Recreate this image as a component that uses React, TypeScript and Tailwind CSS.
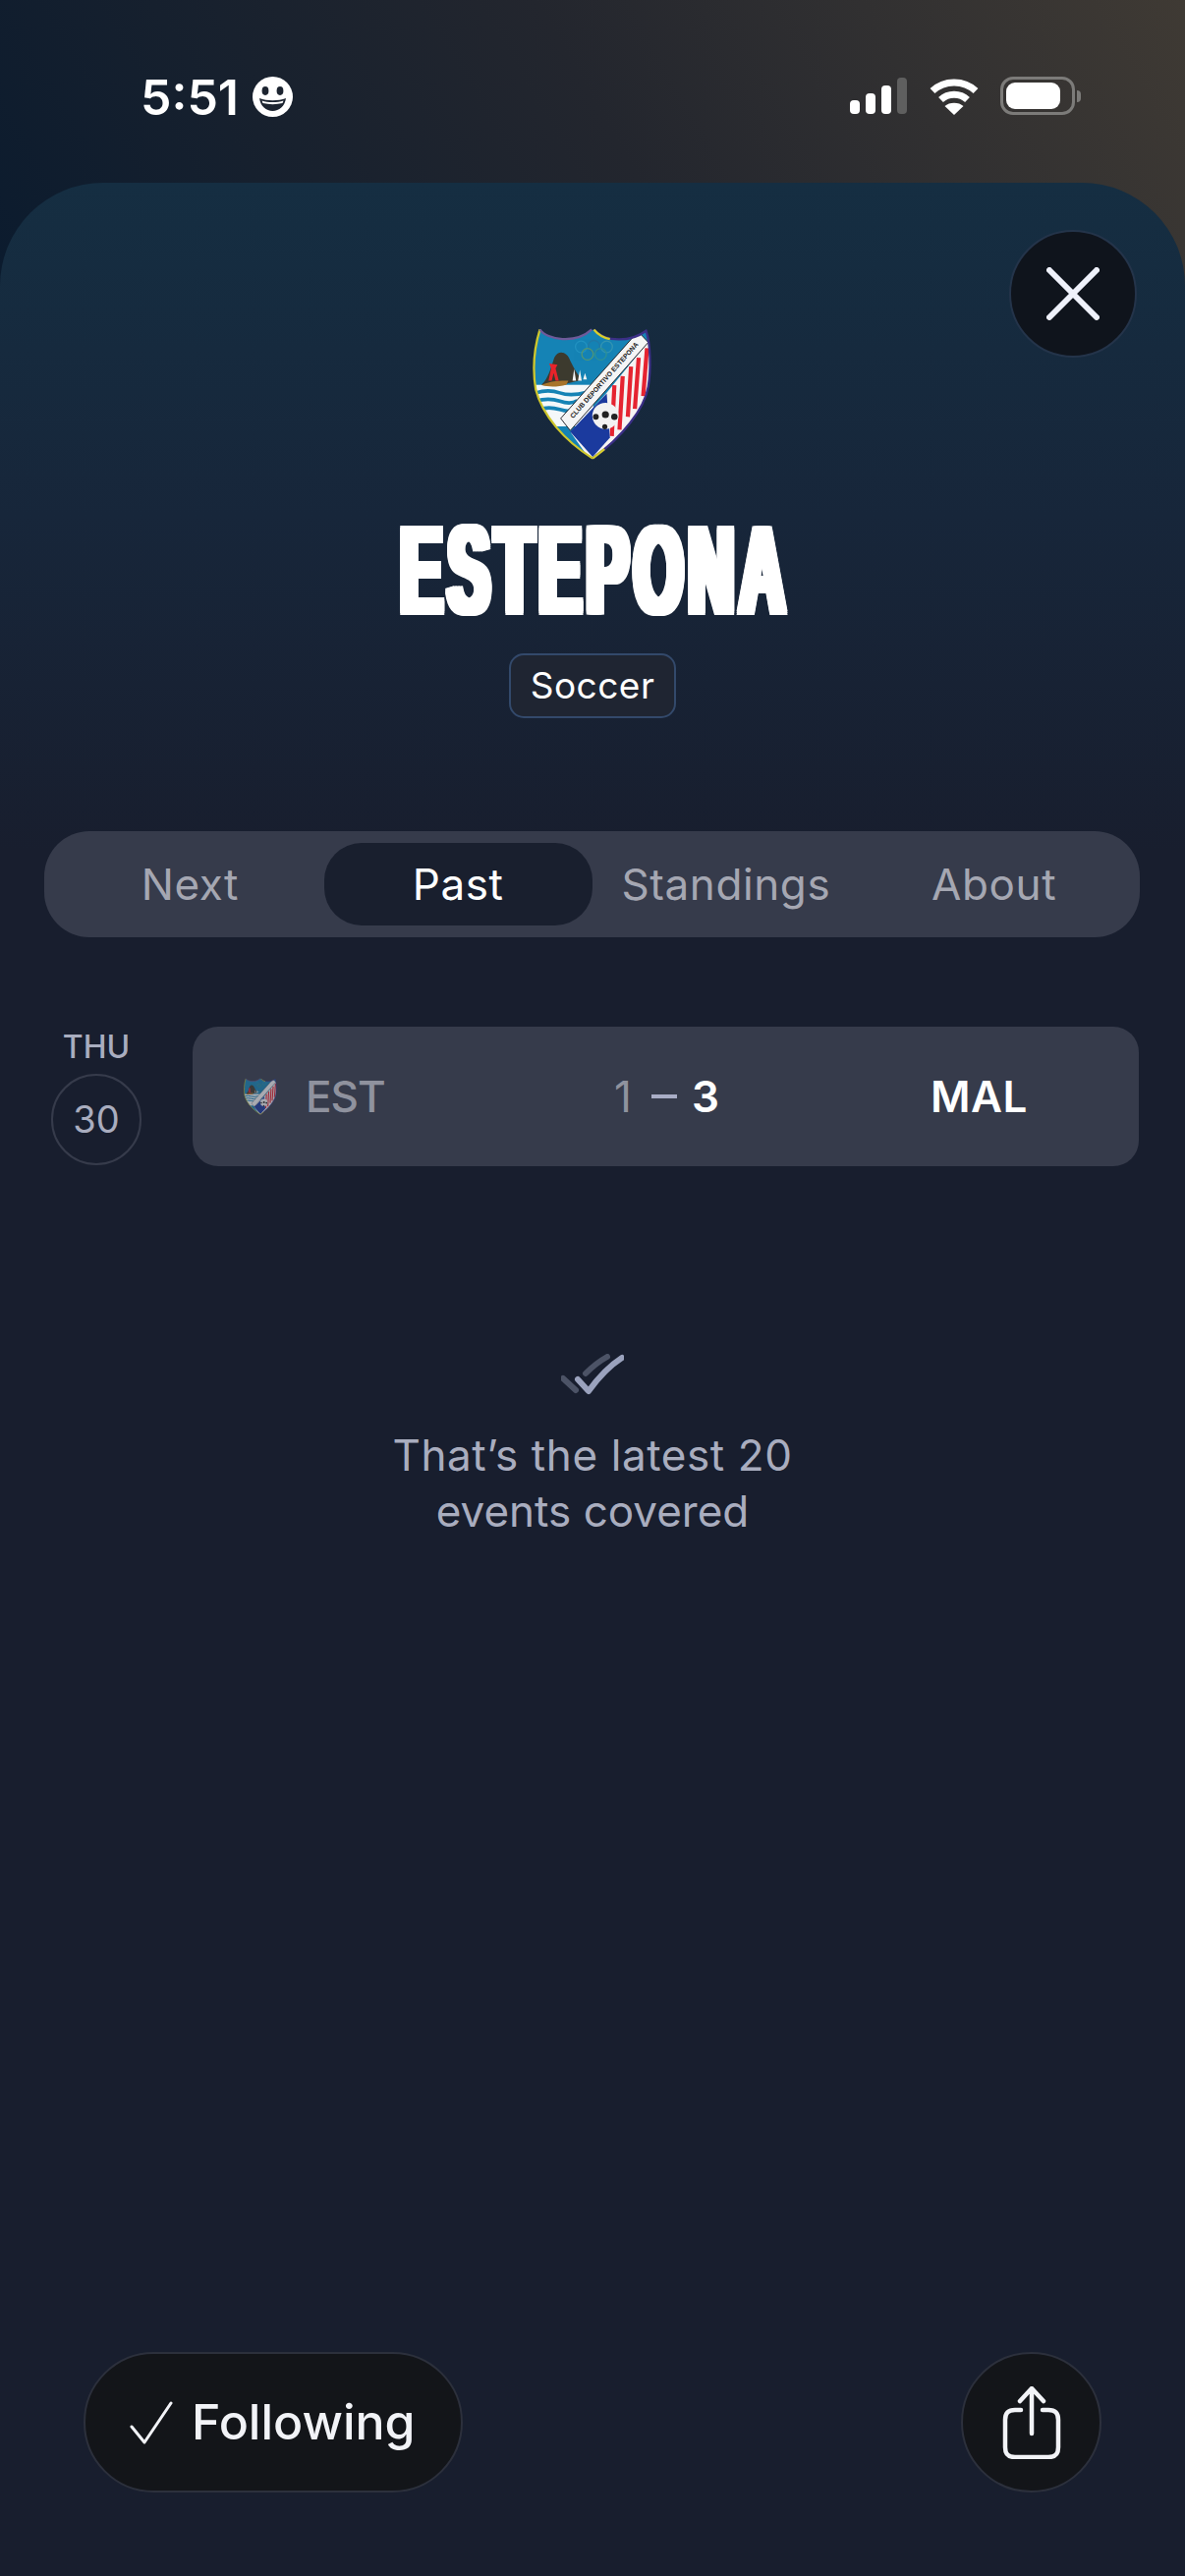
import React from "react";

const tabs = ["Next", "Past", "Standings", "About"];

function Crest({ className, text = true }: { className: string; text?: boolean }) {
    const shield =
        "M143 72 C165 105 255 118 305 72 L312 72 C350 115 430 110 475 76 C490 120 490 200 482 250 C470 320 400 410 308 475 C220 420 150 340 130 260 C120 200 125 130 143 72 Z";
    return (
        <svg viewBox="120 62 375 420" className={className}>
            <defs>
                <clipPath id="shield">
                    <path d={shield} />
                </clipPath>
                <path id="band-line" d="M228 372 L471 98" />
            </defs>
            <g clipPath="url(#shield)">
                <rect x="110" y="60" width="390" height="430" fill="#1583b5" />
                {/* sea */}
                <rect x="110" y="245" width="200" height="130" fill="#f4f8fa" />
                <path d="M130 270 Q170 258 205 270 T290 268 M130 296 Q170 284 205 296 T260 294 M140 322 Q170 312 205 322 T238 320" fill="none" stroke="#1583b5" strokeWidth="11" />
                {/* rock and tower */}
                <path d="M148 245 C170 225 178 190 188 160 C200 135 228 140 238 170 C250 195 262 215 275 230 L232 240 C210 250 170 250 148 245 Z" fill="#3c3a2e" />
                <path d="M148 246 C175 232 210 232 232 232 L226 244 C200 252 170 252 148 246 Z" fill="#a8742a" />
                <path d="M172 178 L198 182 L192 194 L202 232 L192 232 L186 208 L180 232 L170 232 L178 194 Z" fill="#e8232a" />
                <path d="M245 232 L250 195 L256 232 Z M262 232 L268 198 L274 232 Z M278 228 L284 208 L290 228 Z" fill="#f2f4f4" />
                {/* rings */}
                <g fill="none" strokeWidth="4" opacity="0.6">
                    <circle cx="272" cy="126" r="18" stroke="#2a9bc8" />
                    <circle cx="312" cy="124" r="18" stroke="#27729f" />
                    <circle cx="352" cy="126" r="18" stroke="#48a0b0" />
                    <circle cx="292" cy="149" r="18" stroke="#7ba44a" />
                    <circle cx="333" cy="149" r="18" stroke="#3f9a7e" />
                </g>
                {/* lower right */}
                <path d="M240 395 L350 272 L490 100 L490 480 L300 480 Z" fill="#f6f3f3" />
                <path d="M376 246 L368 405 M402 218 L392 385 M428 188 L418 345 M452 160 L440 320 M478 130 L466 280" stroke="#e52330" strokeWidth="13" fill="none" />
                <path d="M238 392 L352 272 L362 410 L308 470 Z" fill="#1b3a9e" />
                <circle cx="348" cy="342" r="41" fill="#f2f2f2" />
                <circle cx="348" cy="338" r="11" fill="#222" />
                <circle cx="318" cy="345" r="9" fill="#222" />
                <circle cx="376" cy="345" r="10" fill="#222" />
                <circle cx="346" cy="376" r="8" fill="#222" />
                {/* band */}
                <path d="M208 350 L450 78 L482 112 L238 388 Z" fill="#f5f5f5" stroke="#26262c" strokeWidth="3" />
            </g>
            {text && (
                <text fontFamily="Liberation Sans, sans-serif" fontWeight="700" fontSize="21" fill="#222">
                    <textPath href="#band-line" startOffset="50%" textAnchor="middle">
                        CLUB DEPORTIVO ESTEPONA
                    </textPath>
                </text>
            )}
            {/* border */}
            <path d="M308 475 C220 420 150 340 130 260 C120 200 125 130 143 72" fill="none" stroke="#cfc72c" strokeWidth="7" />
            <path d="M143 72 C165 105 255 118 305 72" fill="none" stroke="#6e5a9a" strokeWidth="7" />
            <path d="M312 72 C350 115 430 110 475 76 C490 120 490 200 482 250 C470 320 400 410 308 475" fill="none" stroke="#3b2f86" strokeWidth="7" />
            <path d="M308 475 L345 446" stroke="#d8d02a" strokeWidth="7" />
            <path d="M312 72 C325 88 345 98 362 102" fill="none" stroke="#d8d02a" strokeWidth="7" />
        </svg>
    );
}

function StatusIcons() {
    return (
        <div className="flex items-center">
            <svg width="58" height="38" viewBox="0 0 58 38" className="mr-[23px]">
                <rect x="0" y="23" width="10" height="14" rx="4" fill="#fff" />
                <rect x="16" y="16" width="10" height="21" rx="4" fill="#fff" />
                <rect x="32" y="8" width="10" height="29" rx="4" fill="#fff" />
                <rect x="48" y="0" width="10" height="37" rx="4" fill="#5f5f5f" />
            </svg>
            <svg width="50" height="38" viewBox="0 0 50 38" className="mr-[22px]">
                <path d="M3 13.5 C15 2 35 2 47 13.5" fill="none" stroke="#fff" strokeWidth="7" />
                <path d="M11.5 22.5 C19 15.5 31 15.5 38.5 22.5" fill="none" stroke="#fff" strokeWidth="7" />
                <path d="M25 38 L15.5 29 C20 24.5 30 24.5 34.5 29 Z" fill="#fff" />
            </svg>
            <div className="flex items-center">
                <div className="flex h-[39px] w-[76px] items-center rounded-[13px] border-[3px] border-[#7c7b79] p-[3px]">
                    <div className="h-[27px] w-[55px] rounded-[9px] bg-white" />
                </div>
                <div className="ml-[2px] h-[12px] w-[4px] rounded-r-full bg-[#7c7b79]" />
            </div>
        </div>
    );
}

export default function App() {
    return (
        <div className="flex h-[2622px] w-[1206px] flex-col overflow-hidden bg-[#181e2e] bg-[linear-gradient(60deg,#0b1b2e_0%,#23262e_52%,#3f3a34_100%)] bg-[length:100%_300px] bg-no-repeat font-['Inter',sans-serif]">
            {/* status bar */}
            <div className="flex h-[186px] shrink-0 items-start justify-between pl-[143px] pr-[106px] pt-[78px]">
                <div className="flex items-center">
                    <span className="text-[50px] font-semibold leading-[40px] text-white">5:51</span>
                    <svg width="41" height="41" viewBox="0 0 41 41" className="ml-[14px]">
                        <circle cx="20.5" cy="20.5" r="20.5" fill="#fff" />
                        <ellipse cx="13" cy="14.5" rx="3.4" ry="4.4" fill="#1c2430" />
                        <ellipse cx="28" cy="14.5" rx="3.4" ry="4.4" fill="#1c2430" />
                        <path d="M7 22 C15 25 26 25 34 22 C33 30 27 35 20.5 35 C14 35 8 30 7 22 Z" fill="#1c2430" />
                        <path d="M9.5 24.5 C16 26.5 25 26.5 31.5 24.5 L30.5 27 C24 28.5 17 28.5 10.5 27 Z" fill="#fff" />
                    </svg>
                </div>
                <StatusIcons />
            </div>

            {/* sheet */}
            <div className="relative flex flex-1 flex-col rounded-t-[105px] bg-[#181e2e] bg-[linear-gradient(180deg,#152e42_0%,#17263a_50%,#181e2e_100%)] bg-[length:100%_680px] bg-no-repeat">
                <button className="absolute right-[49px] top-[48px] flex h-[130px] w-[130px] items-center justify-center rounded-full border-2 border-[#24344a] bg-[#0f141c]">
                    <svg width="54" height="54" viewBox="0 0 54 54">
                        <path d="M3 3 L51 51 M51 3 L3 51" stroke="#eef1fa" strokeWidth="6" strokeLinecap="round" />
                    </svg>
                </button>

                <div className="flex flex-col items-center pt-[146px]">
                    <Crest className="h-[137px] w-[122px]" />
                    <h1 className="mt-[56px] inline-block h-[112px] origin-center scale-x-[0.508] whitespace-nowrap pl-[11px] text-[126px] font-bold leading-[112px] tracking-[11px] text-white font-['Liberation_Sans',sans-serif] [text-shadow:3px_0_#fff,-3px_0_#fff,6px_0_#fff,-6px_0_#fff,9px_0_#fff,-9px_0_#fff,0_2px_#fff,0_-2px_#fff,3px_2px_#fff,-3px_2px_#fff,6px_2px_#fff,-6px_2px_#fff,9px_2px_#fff,-9px_2px_#fff,3px_-2px_#fff,-3px_-2px_#fff,6px_-2px_#fff,-6px_-2px_#fff,9px_-2px_#fff,-9px_-2px_#fff]">
                        ESTEPONA
                    </h1>
                    <div className="mt-[28px] flex h-[66px] w-[170px] items-center justify-center rounded-[15px] border-2 border-[#33496b] bg-[#1f2532] text-[37px] tracking-[0.5px] text-white">
                        Soccer
                    </div>
                </div>

                {/* tabs */}
                <div className="mx-[45px] mt-[115px] grid h-[108px] w-[1115px] grid-cols-4 rounded-[46px] bg-[#363b4b] p-3">
                    {tabs.map((tab) => (
                        <div
                            key={tab}
                            className={
                                tab === "Past"
                                    ? "flex items-center justify-center rounded-[38px] bg-[#191f2e] text-[44px] tracking-[0.6px] text-white"
                                    : "flex items-center justify-center text-[44px] tracking-[0.6px] text-[#a5a7b2]"
                            }
                        >
                            {tab}
                        </div>
                    ))}
                </div>

                {/* match row */}
                <div className="mt-[91px] flex pl-[52px]">
                    <div className="flex w-[92px] flex-col items-center">
                        <span className="mt-[3px] text-[32px] leading-[36px] font-medium text-[#a9adbf]">THU</span>
                        <div className="mt-[9px] flex h-[93px] w-[92px] items-center justify-center rounded-full border-2 border-[#363b4b] text-[38px] text-[#a9adbf]">
                            30
                        </div>
                    </div>
                    <div className="ml-[52px] grid h-[142px] w-[963px] grid-cols-[377px_322px_1fr] items-center rounded-[26px] bg-[#363b4b] pl-[52px] text-[44px]">
                        <div className="flex items-center">
                            <Crest className="h-[38px] w-[34px] opacity-60" text={false} />
                            <span className="ml-[29px] font-medium tracking-[-1px] text-[#8f929e]">EST</span>
                        </div>
                        <div className="flex items-center">
                            <span className="text-[#8f929e]">1</span>
                            <div className="ml-[20px] h-[4px] w-[26px] bg-[#a9adc6]" />
                            <span className="ml-[15px] font-semibold text-white">3</span>
                        </div>
                        <span className="font-semibold tracking-[0.5px] text-white">MAL</span>
                    </div>
                </div>

                {/* end of list */}
                <div className="mt-[191px] flex flex-col items-center">
                    <svg width="64" height="42" viewBox="0 0 64 42">
                        <path d="M2 25 L15 37 M25 20 C32 13 38 8 47 3" fill="none" stroke="#4c5366" strokeWidth="6" strokeLinecap="round" />
                        <path d="M17 26 L28 38 C38 24 48 13 62 4" fill="none" stroke="#9aa2bd" strokeWidth="6" strokeLinecap="round" strokeLinejoin="round" />
                    </svg>
                    <p className="mt-[33px] text-center text-[44px] leading-[57px] tracking-[0.6px] text-[#a9adbf]">
                        That’s the latest 20
                        <br />
                        <span className="tracking-normal">events covered</span>
                    </p>
                </div>

                {/* actions */}
                <div className="mt-auto flex items-center justify-between px-[85px] pb-[85px]">
                    <button className="flex h-[143px] w-[386px] items-center rounded-full border-2 border-[#2c303c] bg-[#131519] pl-[45px] text-[50px] font-medium text-[#f2f3f7]">
                        <svg width="44" height="44" viewBox="0 0 44 44" className="mr-[19px]">
                            <path d="M2 26 L15 42 L42 2" fill="none" stroke="#f2f3f7" strokeWidth="3" strokeLinecap="round" strokeLinejoin="round" />
                        </svg>
                        Following
                    </button>
                    <button className="flex h-[143px] w-[143px] items-center justify-center rounded-full border-2 border-[#2c303c] bg-[#131519]">
                        <svg width="60" height="74" viewBox="0 0 60 74">
                            <path d="M19 24 H13 C6 24 3 27 3 34 V62 C3 69 6 72 13 72 H47 C54 72 57 69 57 62 V34 C57 27 54 24 47 24 H41" fill="none" stroke="#f2f3f7" strokeWidth="4.5" strokeLinecap="round" />
                            <path d="M30 48 V3 M18 15 L30 2 L42 15" fill="none" stroke="#f2f3f7" strokeWidth="4.5" strokeLinecap="round" strokeLinejoin="round" />
                        </svg>
                    </button>
                </div>
            </div>
        </div>
    );
}
